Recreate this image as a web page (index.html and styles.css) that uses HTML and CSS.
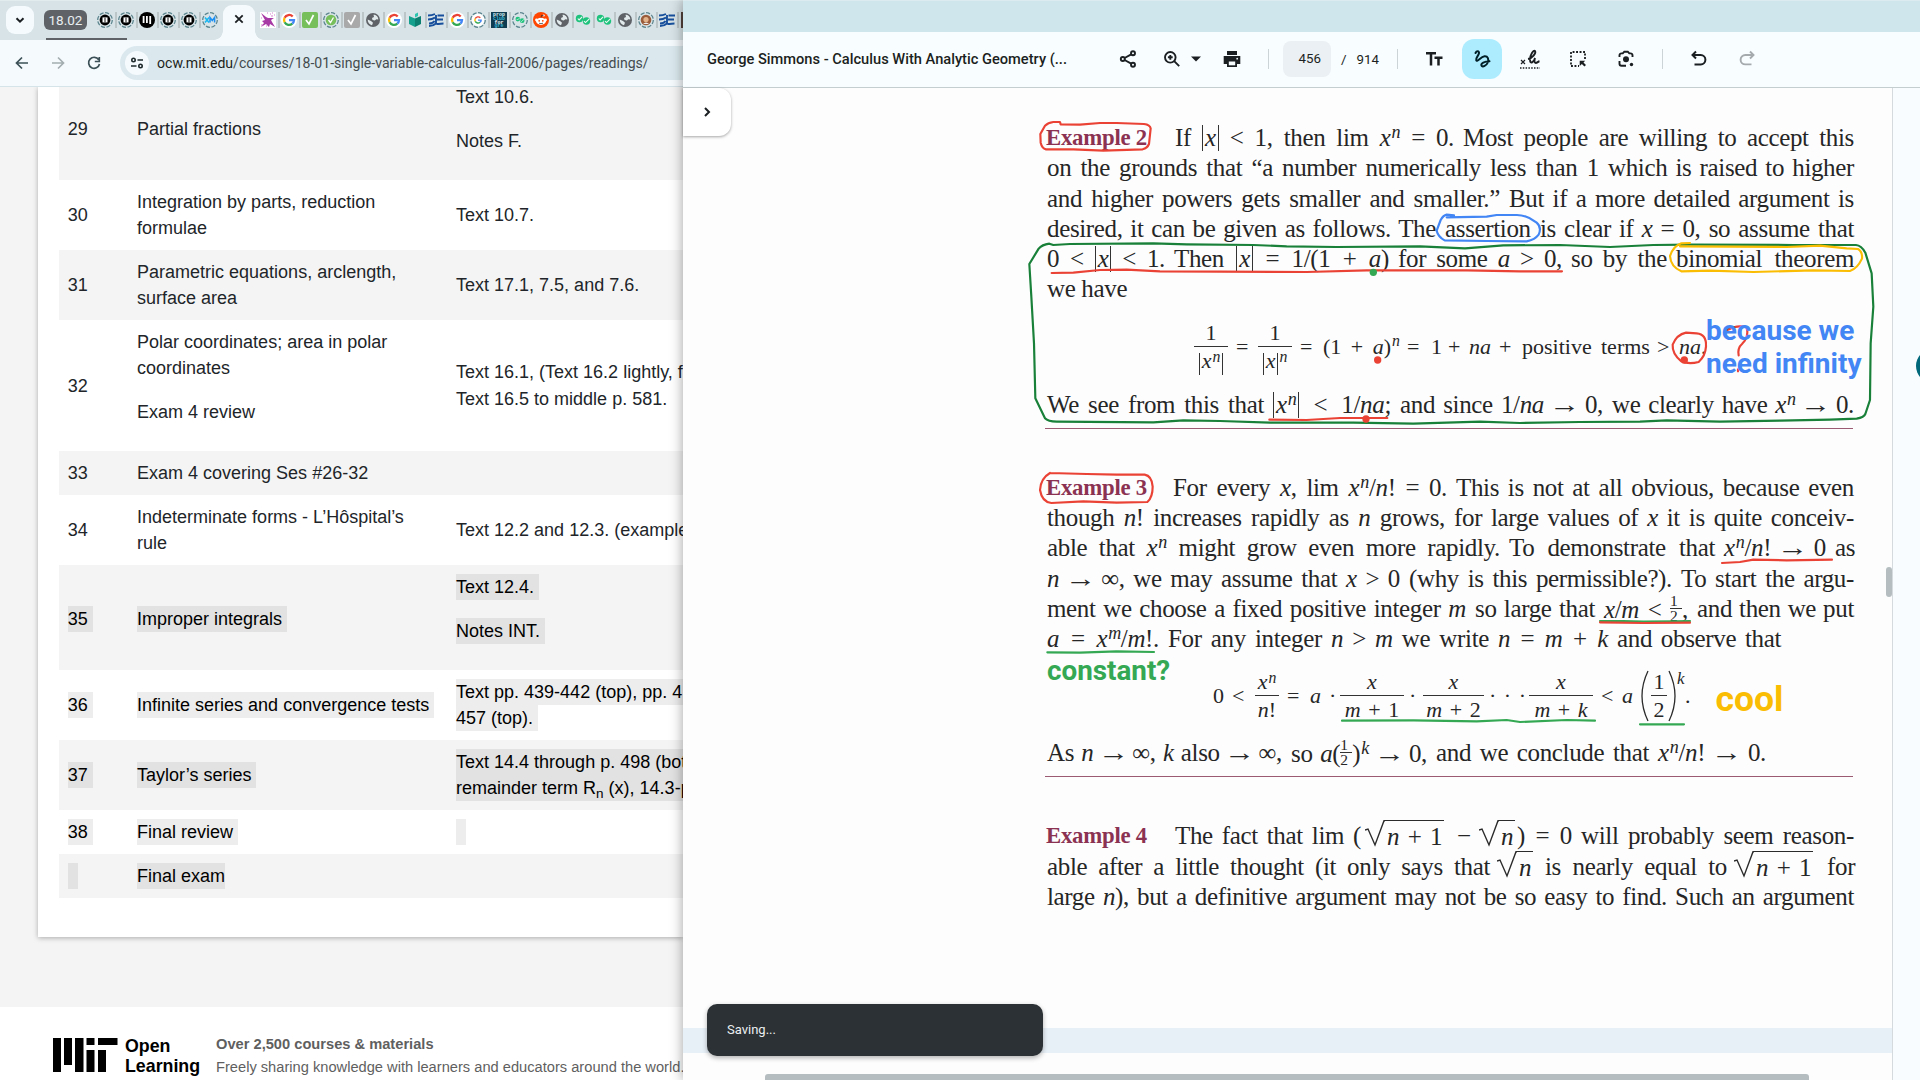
FILE: index.html
```html
<!DOCTYPE html>
<html lang="en">
<head>
<meta charset="utf-8">
<title>Readings</title>
<link rel="stylesheet" href="styles.css">
</head>
<body>
<svg class="defs" width="0" height="0" aria-hidden="true">
  <symbol id="dash" viewBox="0 0 16 16"><circle cx="8" cy="8" r="7.3" fill="none" stroke="#5f8790" stroke-width="1.3" stroke-dasharray="4.2 1.5"/></symbol>
  <symbol id="mono" viewBox="0 0 16 16"><circle cx="8" cy="8" r="8" fill="#000"/><path d="M4.6 4v7M7.9 4v7M11.2 4v8" stroke="#fff" stroke-width="1.8"/></symbol>
  <symbol id="mono-d" viewBox="0 0 16 16"><use href="#dash"/><circle cx="8" cy="8" r="5.4" fill="#000"/><path d="M5.5 5.4h5v5h-5z" fill="#fff"/><path d="M8 5.5v5" stroke="#555" stroke-width="1.4"/></symbol>
  <symbol id="xm" viewBox="0 0 16 16"><use href="#dash"/><path d="M3 5.5l4 5M7 5.5l-4 5" stroke="#18b8ef" stroke-width="1.6"/><path d="M8 10.5v-5l2.3 3 2.3-3v5" fill="none" stroke="#1c8ff2" stroke-width="1.5"/></symbol>
  <symbol id="splash" viewBox="0 0 16 16"><path fill="#fff" d="M0 0h16v16H0z"/><path d="M1 1l5 4 2 1 6 0-3 2 1 2 3 5-5-3-1 3-3-3-5 3 3-4-2-2 3-1z" fill="#a83aa6"/><path d="M7 1h1M10 2h1M12 1h1M14 3h1M11 4h2M1 6h1M1 13h2M6 14h1" stroke="#d57fcf"/></symbol>
  <symbol id="goog" viewBox="0 0 16 16"><circle cx="8" cy="8" r="8" fill="#fff"/><g fill="none" stroke-width="2.300"><path d="M11.700 4.500A5 5 0 0 0 3.600 5.800" stroke="#ea4335"/><path d="M3.600 5.800a5 5 0 0 0 0 4.500" stroke="#fbbc05"/><path d="M3.600 10.300a5 5 0 0 0 7.700 1.400" stroke="#34a853"/><path d="M11.300 11.700A5 5 0 0 0 13 8.200H8" stroke="#4285f4"/></g></symbol>
  <symbol id="goog-d" viewBox="0 0 16 16"><circle cx="8" cy="8" r="6.500" fill="#fff"/><use href="#dash"/><use href="#goog" x="3" y="3" width="10" height="10"/></symbol>
  <symbol id="check" viewBox="0 0 16 16"><rect width="16" height="16" rx="2" fill="#77bf5b"/><path d="M4 8l3 4 4.500-9" fill="none" stroke="#fff" stroke-width="1.700"/></symbol>
  <symbol id="check-g" viewBox="0 0 16 16"><rect width="16" height="16" rx="2" fill="#a9a9a9"/><path d="M4 8l3 4 4.500-9" fill="none" stroke="#fff" stroke-width="1.700"/></symbol>
  <symbol id="check-d" viewBox="0 0 16 16"><use href="#dash"/><circle cx="8" cy="8" r="5.300" fill="#77bf5b"/><path d="M5.500 8l2 2.500 3-5" fill="none" stroke="#fff" stroke-width="1.300"/></symbol>
  <symbol id="globe" viewBox="0 0 16 16"><circle cx="8" cy="8" r="7" fill="#5f6368"/><path d="M8.500 2.800c2.500 0 4.800 2 4.800 4.800l-2-.4-1.500 1.300-2.300-.5-.500-2 2-1zM2.700 7.500l3.300 1.500 2 1.700-1 2.500C4.500 12.500 2.500 10.500 2.700 7.500z" fill="#e2eaec"/></symbol>
  <symbol id="book" viewBox="0 0 16 16"><path d="M2 4l6 2.500V15L2 12z" fill="#15a08d"/><path d="M8 6.500L14 4v8l-6 3z" fill="#0d7f70"/><path d="M8 5.500V2l3-1.500v3.500z" fill="#2cc4ae"/></symbol>
  <symbol id="stripe" viewBox="0 0 16 16"><path d="M0 3.500c3 0 5-.5 7-1.500M0 7.500c3 0 5-.5 7-2M1 11.500c3 0 4.500-.7 5.500-2.500M1 14c3 0 5-.7 7-2.500V3M9.500 3.500H16M9 7.500h6M8.500 12c3 0 5-.5 7-.5" fill="none" stroke="#174f9c" stroke-width="1.900"/></symbol>
  <symbol id="twin" viewBox="0 0 16 16"><circle cx="4.500" cy="6.500" r="3.700" fill="#1fc27c"/><circle cx="11.500" cy="9" r="3.700" fill="#1fc27c"/><path d="M2.800 6.500l1.300 1.400 3-3M9 9.200l1.500 1.400 4-4" fill="none" stroke="#eafaf3" stroke-width="1.100"/></symbol>
  <symbol id="twin-d" viewBox="0 0 16 16"><use href="#dash"/><use href="#twin" x="3" y="3" width="10" height="10"/></symbol>
  <symbol id="reddit" viewBox="0 0 16 16"><circle cx="8" cy="8" r="8" fill="#ff4500"/><ellipse cx="8" cy="9.300" rx="4.800" ry="3.600" fill="#fff"/><circle cx="3.500" cy="8" r="1.400" fill="#fff"/><circle cx="12.500" cy="8" r="1.400" fill="#fff"/><circle cx="10.700" cy="3.500" r="1.100" fill="#fff"/><circle cx="6.200" cy="8.800" r=".9" fill="#ff4500"/><circle cx="9.800" cy="8.800" r=".9" fill="#ff4500"/><path d="M6 11.200q2 1 4 0M8 5.700l.6-2.400 2 .4" stroke="#222" stroke-width=".7" fill="none"/></symbol>
  <symbol id="face" viewBox="0 0 16 16"><use href="#dash"/><circle cx="8" cy="8" r="5.300" fill="#9a5c3b"/><circle cx="8" cy="7.500" r="2.600" fill="#e3b48c"/><path d="M5 12q3-3 6 0" fill="#eee"/></symbol>
</svg>

<div class="desktop">
<section class="browser">
  <header class="tabs">
    <button class="tab-search"><svg width="28" height="28" viewBox="0 0 28 28"><path d="M10.500 12.300l3.500 3.400 3.500-3.400" fill="none" stroke="#1b1f21" stroke-width="2"/></svg></button>
    <div class="group">
      <span class="chip">18.02</span>
      <svg class="fav"><use href="#mono-d"/></svg><svg class="fav"><use href="#mono-d"/></svg><svg class="fav"><use href="#mono"/></svg><svg class="fav"><use href="#mono-d"/></svg><svg class="fav"><use href="#mono-d"/></svg><svg class="fav last"><use href="#xm"/></svg>
    </div>
    <div class="tab-active"><svg width="12" height="12" viewBox="0 0 12 12"><path d="M2.300 2.300l7.400 7.400M9.700 2.300L2.300 9.700" stroke="#1b1f21" stroke-width="1.800"/></svg></div>
    <div class="more-tabs">
      <svg class="fav"><use href="#splash"/></svg><svg class="fav"><use href="#goog"/></svg><svg class="fav"><use href="#check"/></svg><svg class="fav"><use href="#check-d"/></svg><svg class="fav"><use href="#check-g"/></svg><svg class="fav"><use href="#globe"/></svg><svg class="fav"><use href="#goog"/></svg><svg class="fav"><use href="#book"/></svg><svg class="fav"><use href="#stripe"/></svg><svg class="fav"><use href="#goog"/></svg><svg class="fav"><use href="#goog-d"/></svg><svg class="fav" viewBox="0 0 16 16"><path fill="#0f3c50" d="M0 0h16v16H0z"/><g font-family="Liberation Mono,monospace" font-weight="700" font-size="5"><text x="2" y="4" fill="#d8f1f5">prop</text><text x="2" y="7.800" fill="#3cb5d6">club</text><text x="3.500" y="11.500" fill="#fff">for</text><text x="3.500" y="14.800" fill="#3cb5d6">gre</text></g></svg><svg class="fav"><use href="#twin-d"/></svg><svg class="fav"><use href="#reddit"/></svg><svg class="fav"><use href="#globe"/></svg><svg class="fav"><use href="#twin"/></svg><svg class="fav"><use href="#twin"/></svg><svg class="fav"><use href="#globe"/></svg><svg class="fav"><use href="#face"/></svg><svg class="fav"><use href="#stripe"/></svg><span class="fav dark"></span>
    </div>
  </header>
  <nav class="nav">
    <svg width="16" height="16" viewBox="0 0 16 16"><path d="M14 8H3M8 2.500L2.500 8 8 13.500" fill="none" stroke="#3c5157" stroke-width="1.700"/></svg>
    <svg width="16" height="16" viewBox="0 0 16 16"><path d="M2 8h11M8 2.500L13.500 8 8 13.500" fill="none" stroke="#a3adb0" stroke-width="1.700"/></svg>
    <svg width="16" height="16" viewBox="0 0 16 16"><path d="M12.700 4.700A5.500 5.500 0 1 0 13.500 9M13.300 2v4.500H8.800" fill="none" stroke="#3c5157" stroke-width="1.700"/></svg>
    <div class="omnibox">
      <span class="site"><svg width="14" height="14" viewBox="0 0 14 14" fill="none" stroke="#1f2a2d" stroke-width="1.600"><circle cx="3.500" cy="4" r="1.700"/><path d="M7.500 4H13M1 10h5.500"/><circle cx="10.500" cy="10" r="1.700"/></svg></span>
      <span class="url"><b>ocw.mit.edu</b>/courses/18-01-single-variable-calculus-fall-2006/pages/readings/</span>
    </div>
  </nav>
  <main class="course">
    <div class="card">
      <table class="readings">
        <tr class="odd low"><td>29</td><td>Partial fractions</td><td><p>Text 10.6.</p><p>Notes F.</p></td></tr>
        <tr><td>30</td><td>Integration by parts, reduction formulae</td><td>Text 10.7.</td></tr>
        <tr class="odd"><td>31</td><td>Parametric equations, arclength, surface area</td><td>Text 17.1, 7.5, and 7.6.</td></tr>
        <tr><td>32</td><td><p>Polar coordinates; area in polar coordinates</p><p>Exam 4 review</p></td><td>Text 16.1, (Text 16.2 lightly, f<br>Text 16.5 to middle p. 581.</td></tr>
        <tr class="odd"><td>33</td><td>Exam 4 covering Ses #26-32</td><td></td></tr>
        <tr><td>34</td><td>Indeterminate forms - L’Hôspital’s<br>rule</td><td>Text 12.2 and 12.3. (example</td></tr>
        <tr class="odd sel low"><td><i>35</i></td><td><i>Improper integrals</i></td><td><p><i>Text 12.4.</i></p><p><i>Notes INT.</i></p></td></tr>
        <tr class="sel"><td><i>36</i></td><td class="wide"><i>Infinite series and convergence tests</i></td><td><i>Text pp. 439-442 (top), pp. 4</i><br><i>457 (top).</i></td></tr>
        <tr class="odd sel"><td><i>37</i></td><td><i>Taylor’s series</i></td><td><i>Text 14.4 through p. 498 (bot</i><br><i>remainder term R<sub>n</sub> (x), 14.3-p</i></td></tr>
        <tr class="sel"><td><i>38</i></td><td><i>Final review</i></td><td><i class="blank"></i></td></tr>
        <tr class="odd sel"><td><i class="blank"></i></td><td><i class="end">Final exam</i></td><td></td></tr>
      </table>
    </div>
    <footer class="foot">
      <svg width="65" height="34" viewBox="0 0 65 34"><path d="M0 0h8v34H0zM11 0h8v27h-8zM22 0h8.500v34H22zM33.500 0h8v7h-8zM33.500 12h8v22h-8zM45 0h19.500v7H45zM45 12h8v22h-8z"/></svg>
      <strong class="brand">Open<br>Learning</strong>
      <p class="blurb"><b>Over 2,500 courses &amp; materials</b><br><span>Freely sharing knowledge with learners and educators around the world.</span></p>
    </footer>
  </main>
</section>

<section class="viewer">
  <div class="titlebar"></div>
  <header class="tools">
    <span class="doc">George Simmons - Calculus With Analytic Geometry (...</span>
    <svg class="t-share" width="20" height="20" viewBox="0 0 20 20" fill="none" stroke="#1b1f21" stroke-width="1.900"><circle cx="15" cy="4.300" r="2"/><circle cx="4.800" cy="10" r="2"/><circle cx="15" cy="15.700" r="2"/><path d="M6.600 9l6.600-3.700M6.600 11l6.600 3.700"/></svg>
    <svg class="t-zoom" width="20" height="20" viewBox="0 0 20 20" fill="none" stroke="#1b1f21" stroke-width="1.900"><circle cx="8.300" cy="8.300" r="5.300"/><path d="M12.200 12.200l5 5M8.300 5.900v4.800M5.900 8.300h4.800"/></svg>
    <svg class="t-caret" width="10" height="6" viewBox="0 0 10 6"><path d="M0 .5h10L5 5.500z" fill="#1b1f21"/></svg>
    <svg class="t-print" width="20" height="20" viewBox="0 0 20 20"><path d="M5 2h10v4H5zM1.700 7h16.600v8H15v3H5v-3H1.700z" fill="#1b1f21"/><path d="M6.800 12.500h6.400v3.800H6.800z" fill="#f8fdff"/><circle cx="15.200" cy="9.700" r=".9" fill="#f8fdff"/></svg>
    <i class="sep s1"></i>
    <span class="page-no">456</span><span class="slash">/</span><span class="total">914</span>
    <i class="sep s2"></i>
    <svg class="t-text" width="20" height="20" viewBox="0 0 20 20"><path d="M2 4.300h10M7 4v12.500M10.500 8.700h8M14.500 8.500v8" fill="none" stroke="#1b1f21" stroke-width="2.500"/></svg>
    <span class="pen"><svg width="20" height="20" viewBox="0 0 20 20"><path d="M3.500 4C4.500 2 7.300 1.500 7 4.200 6.700 6.500 3.500 8.700 4.200 11.200c1 2.500 4.300-3.400 8.300-3.900 3.500-.3 4.500 3.200 3.300 6.200-1.200 3-5.300 5.200-6.300 3-1-2.300 3-4.200 8-4.300" fill="none" stroke="#001f27" stroke-width="2" stroke-linecap="round"/></svg></span>
    <svg class="t-sign" width="22" height="22" viewBox="0 0 22 22" fill="none" stroke="#1b1f21"><path d="M2 12l4 4M6 12l-4 4" stroke-width="1.200"/><path d="M9 11c4-.5 8.500-6 7-8-1.500-1.500-5 4-5 8.500 0 6 4.500 1.500 5-1.500-1 3-.5 5 .7 5 1.500 0 2.300-1.500 3.800-1.800" stroke-width="1.900"/><path d="M1 20h20" stroke-width="1.500" stroke-dasharray="1.500 1.300"/></svg>
    <svg class="t-sel" width="20" height="20" viewBox="0 0 20 20"><path d="M17 10V3H3v14h8" fill="none" stroke="#1b1f21" stroke-width="1.800" stroke-dasharray="1.900 1.600"/><path d="M11.700 11.700h5.500l-1.700 1.700 2.500 2.500-1.600 1.600-2.500-2.500-2.200 2z" fill="#1b1f21"/></svg>
    <svg class="t-lens" width="20" height="20" viewBox="0 0 20 20"><path d="M3.500 8V6.200a2 2 0 0 1 2-1.800h1.300l1.500-1.700h3.500l1.500 1.700h1.200a2 2 0 0 1 2 1.800V8M3.500 12v2.800a2 2 0 0 0 2 2H10" fill="none" stroke="#1b1f21" stroke-width="1.900"/><circle cx="10" cy="10.300" r="3" fill="#1b1f21"/><circle cx="15.500" cy="15.500" r="1.700" fill="#1b1f21"/></svg>
    <i class="sep s3"></i>
    <svg class="t-undo" width="20" height="20" viewBox="0 0 20 20"><path d="M7 2.500L3.500 6 7 9.500M3.500 6h8.200a4.700 4.700 0 0 1 0 9.400H5.500" fill="none" stroke="#1b1f21" stroke-width="2"/></svg>
    <svg class="t-redo" width="20" height="20" viewBox="0 0 20 20"><path d="M13 2.500L16.500 6 13 9.500M16.500 6H8.300a4.700 4.700 0 0 0 0 9.400h6.200" fill="none" stroke="#a5abad" stroke-width="1.900"/></svg>
  </header>
  <div class="body">
    <div class="pages">
      <article class="sheet">
        <div class="line a1"><span class="seg ex">Example 2</span><span class="seg">If <q>x</q> &lt; 1, then lim <em>x<sup>n</sup></em> = 0.</span><span class="seg">Most people are willing to accept this</span></div>
        <div class="line a2"><span class="seg">on the grounds that “a number numerically</span><span class="seg">less than 1</span><span class="seg">which is raised to higher</span></div>
        <div class="line a3"><span class="seg">and higher powers gets smaller and smaller.”</span><span class="seg">But if a more detailed argument is</span></div>
        <div class="line a4"><span class="seg">desired, it can be given as follows. The</span><span class="seg">assertion</span><span class="seg">is clear if <em>x</em> = 0, so assume that</span></div>
        <div class="line a5"><span class="seg">0 &lt; <q>x</q> &lt; 1.</span><span class="seg">Then <q>x</q> = 1/(1 + <em>a</em>)</span><span class="seg">for some <em>a</em> &gt; 0,</span><span class="seg">so by the</span><span class="seg">binomial theorem</span></div>
        <div class="line a6"><span class="seg">we have</span></div>
        <div class="eq eq1">
          <span class="frac"><span>1</span><span><q>x<sup>n</sup></q></span></span><span>=</span>
          <span class="frac"><span>1</span><span><q>x</q><em><sup>n</sup></em></span></span><span>=</span>
          <span>(1 + <em>a</em>)<em><sup>n</sup></em></span><span>=</span><span>1</span><span>+</span><em>na</em><span>+</span><span>positive</span><span>terms</span><span>&gt;</span><span><em>na</em>.</span>
        </div>
        <div class="line a7"><span class="seg">We see from this that</span><span class="seg"><q>x<sup>n</sup></q> &lt; 1/<em>na</em>;</span><span class="seg">and since 1/<em>na</em> <i class="to">→</i> 0,</span><span class="seg">we clearly have <em>x<sup>n</sup></em> <i class="to">→</i> 0.</span></div>
        <hr>
        <div class="line b1"><span class="seg ex">Example 3</span><span class="seg">For every <em>x</em>, lim <em>x<sup>n</sup></em>/<em>n</em>! = 0.</span><span class="seg">This is not at all obvious, because even</span></div>
        <div class="line b2"><span class="seg">though <em>n</em>! increases rapidly as <em>n</em> grows,</span><span class="seg">for large values of <em>x</em> it is quite conceiv-</span></div>
        <div class="line b3"><span class="seg">able that <em>x<sup>n</sup></em> might grow even more rapidly.</span><span class="seg">To demonstrate that</span><span class="seg"><em>x<sup>n</sup></em>/<em>n</em>! <i class="to">→</i> 0</span><span class="seg">as</span></div>
        <div class="line b4"><span class="seg"><em>n</em> <i class="to">→</i> ∞, we may assume that <em>x</em> &gt; 0</span><span class="seg">(why is this permissible?).</span><span class="seg">To start the argu-</span></div>
        <div class="line b5"><span class="seg">ment we choose a fixed positive integer <em>m</em></span><span class="seg">so large that</span><span class="seg"><em>x</em>/<em>m</em> &lt; <span class="half"><span>1</span><span>2</span></span>,</span><span class="seg">and then we put</span></div>
        <div class="line b6"><span class="seg"><em>a</em> = <em>x<sup>m</sup></em>/<em>m</em>!.</span><span class="seg">For any integer <em>n</em> &gt; <em>m</em> we write</span><span class="seg"><em>n</em> = <em>m</em> + <em>k</em></span><span class="seg">and observe that</span></div>
        <div class="eq eq2">
          <span>0</span><span>&lt;</span><span class="frac"><span><em>x<sup>n</sup></em></span><span><em>n</em>!</span></span><span>=</span><em>a</em><span>·</span>
          <span class="frac"><em>x</em><span><em>m</em> + 1</span></span><span class="mul">·</span><span class="frac"><em>x</em><span><em>m</em> + 2</span></span><span class="dots">···</span><span class="frac"><em>x</em><span><em>m</em> + <em>k</em></span></span><span>&lt;</span><em>a</em>
          <svg width="9" height="52" viewBox="0 0 9 52"><path d="M8 1Q-4 26 8 51" fill="none" stroke="#2b2b2b" stroke-width="1.300"/></svg><span class="frac"><span>1</span><span>2</span></span><svg width="9" height="52" viewBox="0 0 9 52"><path d="M1 1q12 25 0 50" fill="none" stroke="#2b2b2b" stroke-width="1.300"/></svg><em class="pow">k</em><span>.</span>
        </div>
        <div class="line b7"><span class="seg">As <em>n</em> <i class="to">→</i> ∞, <em>k</em> also <i class="to">→</i> ∞,</span><span class="seg">so <em>a</em>(<span class="half"><span>1</span><span>2</span></span>)<em><sup>k</sup></em> <i class="to">→</i> 0,</span><span class="seg">and we conclude that</span><span class="seg"><em>x<sup>n</sup></em>/<em>n</em>! <i class="to">→</i> 0.</span></div>
        <hr>
        <div class="line c1"><span class="seg ex">Example 4</span><span class="seg">The fact that lim (</span><span class="root"><svg width="20" height="28" viewBox="0 0 20 28"><path d="M0 10l3-1 7 16L19 .7h1" fill="none" stroke="#2b2b2b" stroke-width="1.400"/></svg><span><em>n</em> + 1</span></span><span>−</span><span class="root"><svg width="20" height="28" viewBox="0 0 20 28"><path d="M0 10l3-1 7 16L19 .7h1" fill="none" stroke="#2b2b2b" stroke-width="1.400"/></svg><span><em>n</em></span></span><span class="seg">) = 0</span><span class="seg">will probably seem reason-</span></div>
        <div class="line c2"><span class="seg">able after a little thought (it only says that</span><span class="root"><svg width="20" height="28" viewBox="0 0 20 28"><path d="M0 10l3-1 7 16L19 .7h1" fill="none" stroke="#2b2b2b" stroke-width="1.400"/></svg><span><em>n</em></span></span><span class="seg">is nearly equal to</span><span class="root"><svg width="20" height="28" viewBox="0 0 20 28"><path d="M0 10l3-1 7 16L19 .7h1" fill="none" stroke="#2b2b2b" stroke-width="1.400"/></svg><span><em>n</em> + 1</span></span><span class="seg last">for</span></div>
        <div class="line c3"><span class="seg">large <em>n</em>), but a definitive argument may not be so easy to find. Such an argument</span></div>

        <svg class="ink" viewBox="683 88 1209 940" fill="none" stroke-linecap="round" stroke-linejoin="round">
          <g transform="translate(1020 110) scale(.33333)" stroke-width="6.500">
            <path stroke="#ea4335" d="M122 43L120 36 100 36Q84 38 75 47L61 72 62 98Q66 115 78 118L160 118 250 122 368 118Q382 114 387 102L392 55Q390 44 372 42L290 39 240 39 180 44 122 43"/>
            <path stroke="#188038" d="M100 405L88 401Q66 404 56 416L28 462 34 560 42 700 46 865 75 925Q84 935 110 935L400 937 490 931 600 933 750 938 1000 938 1180 941 1380 935 1500 939 1680 936 1860 935 1940 931 2100 935 2280 932 2430 929 2510 926Q2532 922 2536 912L2550 870 2552 700 2560 590 2555 490 2536 428Q2524 406 2508 405L2320 405 2010 404 1900 405 1770 411 1620 405 1450 406 1335 415 1200 409 950 411 800 409 700 405 500 403 400 400 150 402 100 405"/>
            <path stroke="#ea4335" d="M95 489L160 488 240 480 320 479 420 484 600 485 860 486 1040 481 1340 481 1500 484 1626 484M748 929L860 930 960 924 1102 924"/>
            <circle cx="1060" cy="487" r="11" fill="#34a853"/><circle cx="1073" cy="750" r="11" fill="#ea4335"/><circle cx="1038" cy="927" r="11" fill="#ea4335"/>
            <path stroke="#4285f4" d="M1302 316L1280 314Q1270 316 1262 330L1250 362Q1254 380 1274 391L1400 393 1520 394Q1545 389 1556 374 1566 352 1550 338 1520 314 1488 315L1430 315 1400 320 1280 322"/>
            <path stroke="#fbbc04" d="M2010 399L1984 400Q1960 408 1950 438 1952 470 1984 484L2070 482 2200 486 2380 481 2490 483Q2512 476 2526 446 2528 425 2514 417L2480 415 2400 407 2300 411 1980 409"/>
            <path stroke="#ea4335" d="M2030 670Q2060 672 2058 710 2056 738 2036 756 2006 764 1984 754 1956 732 1958 704 1970 674 1998 668L2030 670M2122 660Q2150 644 2180 652 2188 680 2166 702 2152 714 2156 736M2154 778V784"/>
            <circle cx="1993" cy="750" r="11" fill="#ea4335"/>
          </g>
          <g transform="translate(1020 460) scale(.33333)" stroke-width="6.500">
            <path stroke="#ea4335" d="M90 39Q62 55 60 90 66 126 94 129L190 124 290 128 382 126Q398 112 398 80 396 48 374 44L290 44 200 42 90 39"/>
            <path stroke="#34a853" d="M82 577L180 578 290 574 402 576M966 782L1180 781 1370 784 1460 780 1500 786 1640 780 1725 782M1740 483H1810L1870 485 1960 484 2010 483M1860 793H1992"/>
            <path stroke="#ea4335" d="M2106 309L2160 306 2200 299 2300 301 2436 299M1740 487L1870 489 2010 488"/>
          </g>
        </svg>
        <p class="note infinity">because we<br>need infinity</p>
        <p class="note constant">constant?</p>
        <p class="note cool">cool</p>
      </article>
      <div class="next-sheet"></div>
      <button class="expand"><svg width="10" height="12" viewBox="0 0 10 12"><path d="M3 2l4 4-4 4" fill="none" stroke="#1b1f21" stroke-width="2"/></svg></button>
      <div class="toast">Saving...</div>
      <span class="vbar"></span><span class="hbar"></span>
    </div>
    <aside class="rail"><span class="fab"></span></aside>
  </div>
</section>
</div>
</body>
</html>
```
FILE: styles.css
```css
*{box-sizing:border-box}
body{margin:0;font-family:"Liberation Sans",Arial,sans-serif}
p{margin:0}
button{border:0;padding:0;background:none}
.defs{position:absolute}
.desktop{display:flex;width:1920px;height:1080px;overflow:hidden;background:#fff}
svg{display:block;flex:none}

/* browser window */
.browser{width:683px;flex:none;display:flex;flex-direction:column;overflow:hidden}
.tabs{height:40px;background:#d7e3e7;display:flex;align-items:center;border-top:1px solid #e2ecef;flex:none}
.tab-search{width:28px;height:28px;margin:-1px 0 0 6px;border-radius:9px;background:#f5fafd;flex:none}
.group{display:flex;align-items:center;margin-left:10px;height:39px;padding-bottom:1px;flex:none;
  background:linear-gradient(#5f6368,#5f6368) 2px 37px/81px 2px no-repeat}
.chip{width:43px;height:20px;border-radius:6px;background:#5f6368;color:#e9eef0;font:13.500px/20px Roboto,sans-serif;text-align:center;margin-right:9px}
.fav{display:block;flex:none;width:21px;height:16px;padding:0 2px 0 1px;border-right:2px solid #bcc5c7}
.fav.last{border-color:transparent;width:21px}
.fav.dark{background:#54423d;border:0;margin-left:2px}
.tab-active{width:32px;height:35px;margin:4px 4px 0 1px;border-radius:9px 9px 0 0;background:#f5fafd;display:flex;justify-content:center;flex:none;padding-top:8px;position:relative}
.tab-active::before,.tab-active::after{content:"";position:absolute;bottom:0;width:9px;height:9px}
.tab-active::before{left:-9px;background:radial-gradient(circle at 0 0,transparent 8.500px,#f5fafd 9px)}
.tab-active::after{right:-9px;background:radial-gradient(circle at 100% 0,transparent 8.500px,#f5fafd 9px)}
.more-tabs{display:flex;align-items:center;padding-bottom:1px}
.nav{height:47px;background:#f5fafd;border-bottom:1px solid #d5e4e9;display:flex;align-items:center;padding:0 0 1px 14px;gap:20px;flex:none}
.omnibox{display:flex;align-items:center;height:34px;margin-left:-2px;flex:1;border-radius:17px 0 0 17px;background:#dbe9ee;padding-left:5px;white-space:nowrap}
.site{width:24px;height:24px;border-radius:50%;background:#f5fafd;display:flex;align-items:center;justify-content:center;margin-right:8px}
.url{font:14.080px Roboto,sans-serif;color:#444b4e}
.url b{font-weight:400;color:#1b1f21}
.course{flex:1;background:#f4f4f4;overflow:hidden;display:flex;flex-direction:column}
.card{margin-left:38px;height:850px;background:#fff;box-shadow:0 1px 5px rgba(0,0,0,.3);padding-left:21px;flex:none;clip-path:inset(0 0 -10px -10px)}
.readings{border-collapse:collapse;table-layout:fixed;width:900px;margin-top:-12px;font-size:18px;line-height:26.250px;color:#212529}
.readings td{padding:8.750px;vertical-align:middle}
.readings td:first-child{width:69.300px}
.readings td:nth-child(2){width:319px}
.readings td:nth-child(3){white-space:nowrap}
.readings .low td:nth-child(-n+2){padding-top:10px;padding-bottom:7.500px}
.readings p{margin-bottom:17.500px}
.odd{background:#f4f4f4}
.readings .sel{color:#000}
.sel i{font-style:normal;background:rgba(0,0,0,.07);padding:3px 5px 3px 0}
.sel .end{padding-right:0}
.sel i.blank{padding:3px 5px}
.readings .wide{white-space:nowrap;padding-right:0}
.sel sub{font-size:75%;line-height:0;vertical-align:-4px}
.foot{margin-top:70px;flex:1;background:#fff;display:flex;padding:31px 0 0 53px;align-items:flex-start}
.brand{font-size:17.800px;line-height:19.500px;margin:-1px 0 0 7px;color:#000;width:91px;flex:none}
.blurb{font-size:14.660px;line-height:23px;color:#5f5f5f;white-space:nowrap;margin-top:-5px}

/* document viewer */
.viewer{flex:1;display:flex;flex-direction:column;box-shadow:0 0 12px rgba(0,0,0,.38);position:relative;background:#f8fdff}
.titlebar{height:32px;background:#cfe6ed;border-top:1px solid #dcebf0;flex:none}
.tools{height:56px;background:#f8fdff;border-bottom:1px solid #c4ced1;display:flex;align-items:center;padding:0 0 1px 24px;flex:none;font-family:Roboto,sans-serif;color:#1b1f21}
.doc{font-size:14.650px;font-weight:500;width:411px;white-space:nowrap}
.t-zoom{margin-left:24px}.t-caret{margin-left:9px}.t-print{margin-left:21px}
.sep{width:1px;height:20px;background:#ccd4d7}
.s1{margin-left:26px}
.page-no{margin-left:14px;width:48px;height:36px;border-radius:8px;background:#ebf0f4;font-size:13.300px;line-height:36px;padding-left:15.500px}
.slash{font-size:13.500px;margin-left:10px;width:17px}.total{font-size:13.300px;width:39px;margin-left:-1.500px;margin-right:1.500px}
.t-text{margin-left:26px}
.pen{width:40px;height:40px;border-radius:12px;background:#adecff;margin-left:18px;display:flex;align-items:center;justify-content:center}
.t-sign{margin-left:17px}.t-sel{margin-left:27px}.t-lens{margin-left:28px}.s3{margin-left:26px}.t-undo{margin-left:26px}.t-redo{margin-left:28px}
.body{flex:1;display:flex;min-height:0}
.pages{width:1209px;background:#fdfdfd;position:relative;display:flex;flex-direction:column}
.rail{flex:1;border-left:1px solid #d5dade;background:#f8fcff;position:relative;overflow:hidden}
.fab{position:absolute;left:23px;top:261px;width:34px;height:34px;border-radius:50%;background:#00687a}
.sheet{position:relative;height:940px;padding:35.100px 38px 0 364px;font:25px/30.250px "Liberation Serif",serif;color:#262626;flex:none}
.next-sheet{margin-top:25px;flex:1;background:#fdfdfd;box-shadow:0 -25px 0 #e8f0f7}
.line{display:grid;height:30.250px;white-space:nowrap;letter-spacing:-.35px}
.seg{text-align:justify;text-align-last:justify;margin-right:9px}
.ex{font-weight:700;color:#8b3252;font-size:22.800px;margin:0 28px 0 -1px;letter-spacing:-.25px}
em{font-style:italic}
sup{font-size:72%;line-height:0;vertical-align:8px;font-style:italic;margin-left:1px}
q{quotes:none;font-style:italic;display:inline-block;border:solid #333;border-width:0 1.500px;height:26px;line-height:25px;padding:0 2px;vertical-align:baseline}
.to{font-style:normal;display:inline-block;transform:scaleX(1.25)}
.a1{grid-template-columns:128px 288px 400px}
.a2{grid-template-columns:443px 118px 255px}
.a3{grid-template-columns:462px 354px}
.a4{grid-template-columns:398px 95px 323px}
.a5{grid-template-columns:127px 224px 173px 105px 187px}
.a6{grid-template-columns:89px}
.a7{grid-template-columns:226px 127px 212px 251px;margin-top:1px}
.b1{grid-template-columns:126px 283px 407px}
.b2{grid-template-columns:407px 409px}
.b3{grid-template-columns:462px 215px 111px 28px}
.b4{grid-template-columns:362px 272px 182px}
.b5{grid-template-columns:428px 129px 93px 166px}
.b6{grid-template-columns:121px 330px 119px 173px}
.b7{grid-template-columns:244px 145px 222px 117px;margin-top:.500px}
.c1{grid-template-columns:128px 192px 90px 24px 36px 64px 282px;height:30.750px}
.c1 .seg:nth-child(2){margin-right:6px}
.c2{grid-template-columns:452px 46px 191px 91px 36px}
.c3{grid-template-columns:816px}
.seg.last{text-align-last:right}
.sheet hr{border:0;height:1.500px;background:#9c5a72;margin:7.500px 1px 0 -2px}
.sheet hr + .line{margin-top:43.800px}
.eq{display:grid;height:84.250px;align-items:center;font-size:22px;line-height:24px;white-space:nowrap}
.eq1{margin-left:147px;grid-template-columns:42px 22px 42px 23px 84px 24px 17px 21px 30px 23px 79px 56px 22px 30px}
.eq1 > :nth-child(5){word-spacing:4px}
.eq2{height:83.250px;margin-left:166px;grid-template-columns:19px 23px 32px 23px 19px 11px 72px 11px 69px 37px 72px 21px 18px 11px 17px 9px 8px 8px}
.frac{display:flex;flex-direction:column;align-items:stretch;text-align:center;margin-right:8px}
.frac > span,.frac > em{height:26px}
.frac > :first-child{border-bottom:1.500px solid #333}
.frac > :last-child{padding-top:2px}
.eq2 .frac{word-spacing:2px}
.eq2 svg + .frac{margin-right:1px}
.frac sup{vertical-align:6px}
.frac q{height:22px;line-height:16px}
.mul{margin-left:-3px}
.dots{letter-spacing:7.500px;margin-left:-3px}
.pow{font-size:17px;align-self:start;padding-top:15px;line-height:20px}
.half{display:inline-flex;flex-direction:column;font-size:15.500px;line-height:14px;height:28px;vertical-align:12px;margin-bottom:-20px;text-align:center;width:12px;letter-spacing:0}
.half > :first-child{border-bottom:1px solid #333}
.root{display:flex;margin:-1px 0 0 -2px}
.root > span{border-top:1.500px solid #2b2b2b;height:28px;line-height:32px;padding:0 1px 0 2px;letter-spacing:.2px;word-spacing:1.500px}
.ink{position:absolute;left:0;top:0;width:1209px;height:940px}
.note{position:absolute;font-family:Roboto,sans-serif;font-weight:700;white-space:nowrap}
.infinity{left:1023px;top:226px;font-size:28px;line-height:33px;color:#4285f4}
.constant{left:364px;top:566px;font-size:27.800px;line-height:33px;color:#34a853}
.cool{left:1032.500px;top:591px;font-size:35.500px;line-height:40px;color:#fbbc04}
.expand{position:absolute;left:0;top:0;width:48px;height:48px;background:#fff;border-radius:0 12px 12px 0;box-shadow:0 1px 3px rgba(0,0,0,.35);display:flex;align-items:center;justify-content:center}
.toast{position:absolute;left:24px;top:916px;width:336px;height:52px;border-radius:10px;background:#2b3134;color:#eceff1;font:13px/51px Roboto,sans-serif;padding-left:20px;box-shadow:0 2px 5px rgba(0,0,0,.3)}
.vbar{position:absolute;right:0;top:479px;width:6px;height:30px;border-radius:3px;background:#b6bdc0}
.hbar{position:absolute;left:82px;bottom:0;width:1044px;height:6px;border-radius:3px 3px 0 0;background:#b6bdc0}
```
